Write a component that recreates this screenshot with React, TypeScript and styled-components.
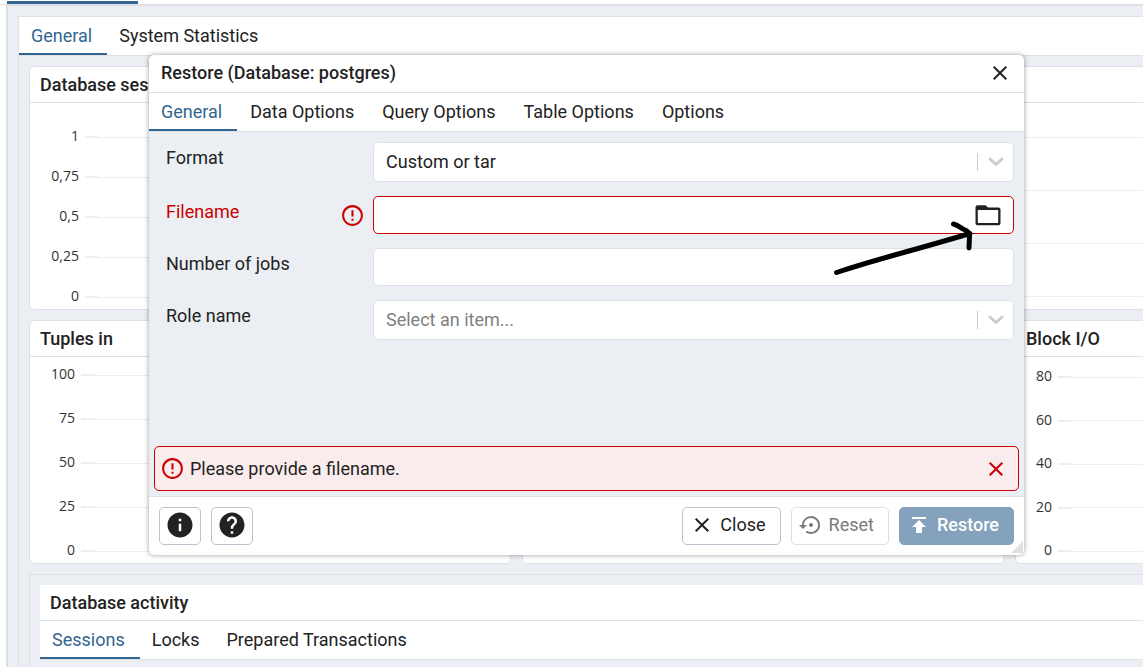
import React from "react";
import styled, { createGlobalStyle, css } from "styled-components";
import {
  MdClose,
  MdErrorOutline,
  MdHelp,
  MdInfo,
  MdPublish,
  MdSettingsBackupRestore,
} from "react-icons/md";

const color = {
  text: "#222222",
  primary: "#326690",
  primaryDisabled: "#84a2bb",
  page: "#ebeef3",
  border: "#dde0e6",
  control: "#bac1cd",
  error: "#cc0000",
  errorSoft: "#faecec",
  grid: "#eeeeee",
};

const GlobalStyle = createGlobalStyle`
  *, *::before, *::after { box-sizing: border-box; }
  html, body { margin: 0; height: 100%; overflow: hidden; }
  body {
    background: #fff;
    color: ${color.text};
    font-family: Roboto, "Liberation Sans", sans-serif;
    font-size: 18px;
    line-height: 24px;
  }
  button, input, select { font: inherit; color: inherit; }
`;

const Page = styled.div`
  position: relative;
  display: flex;
  flex-direction: column;
  height: 100vh;
  overflow: hidden;
`;

const DocumentTabs = styled.div`
  display: flex;
  height: 4px;
  padding: 1px 0 0 7px;
`;

const ActiveDocument = styled.div`
  width: 131px;
  background: ${color.primary};
`;

const Workspace = styled.div`
  display: flex;
  flex: 1;
  min-height: 0;
  border-top: 1px solid ${color.border};
`;

const Sidebar = styled.div`
  width: 6px;
`;

const Dashboard = styled.main`
  display: flex;
  flex: 1;
  min-width: 0;
  padding: 10px 0 0 10px;
  background: ${color.page};
  border-left: 2px solid ${color.border};
  border-top: 1px solid ${color.border};
`;

const DashboardPanel = styled.section`
  display: flex;
  flex: 1;
  flex-direction: column;
  min-width: 0;
  border: 1px solid ${color.border};
  border-width: 1px 0 0 1px;
`;

const TabBar = styled.div<{ $spaced?: boolean }>`
  display: flex;
  flex: none;
  gap: ${(p) => (p.$spaced ? 1 : 0)}px;
  height: 39px;
  background: #fff;
  border-bottom: 1px solid ${color.border};
`;

const Tab = styled.button<{ $active?: boolean }>`
  height: 38px;
  padding: 1px 15px 0 12px;
  border: 0;
  border-bottom: 2px solid ${(p) => (p.$active ? color.primary : "transparent")};
  background: none;
  color: ${(p) => (p.$active ? color.primary : color.text)};
  white-space: nowrap;
`;

const DashboardBody = styled.div`
  display: grid;
  flex: 1;
  grid-template-columns: minmax(max-content, 1fr);
  grid-template-rows: auto 1fr;
  gap: 10px;
  padding: 10px 0 0 10px;
  overflow: hidden;
`;

const ChartGrid = styled.div`
  display: grid;
  grid-template-columns: repeat(3, minmax(482px, 1fr));
  grid-auto-rows: 244px;
  gap: 10px 11px;
`;

const Card = styled.article<{ $wide?: boolean }>`
  display: flex;
  flex-direction: column;
  grid-column: span ${(p) => (p.$wide ? 2 : 1)};
  background: #fff;
  border: 1px solid ${color.border};
  border-radius: 5px;
`;

const CardTitle = styled.h2`
  flex: none;
  height: 36px;
  margin: 0;
  padding: 6px 10px;
  border-bottom: 1px solid ${color.border};
  font-size: 18px;
  font-weight: 500;
  line-height: 24px;
`;

const Plot = styled.div<{ $top: number; $axis: number }>`
  display: grid;
  flex: 1;
  grid-template-columns: ${(p) => p.$axis}px 1fr;
  align-content: space-between;
  padding: ${(p) => p.$top}px 0 2px;
`;

const TickLabel = styled.span`
  height: 20px;
  padding-right: 6px;
  color: #333;
  font-family: "Open Sans", "Noto Sans", sans-serif;
  font-size: 14px;
  line-height: 18px;
  text-align: right;
`;

const GridLine = styled.span`
  display: flex;
  align-items: center;
  height: 20px;

  &::before {
    width: 13px;
    height: 2px;
    background: ${color.grid};
    content: "";
  }

  &::after {
    flex: 1;
    height: 1px;
    background: ${color.grid};
    content: "";
  }
`;

const Activity = styled.section`
  padding: 10px;
  border: 1px solid ${color.border};
`;

const ActivityHeader = styled.header`
  background: #fff;
`;

const Dialog = styled.div`
  position: absolute;
  top: 55px;
  left: 149px;
  right: 119px;
  display: flex;
  flex-direction: column;
  height: 500px;
  overflow: hidden;
  background: #fff;
  border-radius: 5px;
  box-shadow: 0 0 5px rgba(0, 0, 0, 0.4);
`;

const DialogHeader = styled.header`
  display: flex;
  align-items: center;
  justify-content: space-between;
  height: 38px;
  padding: 0 12px 1px;
  border-bottom: 1px solid ${color.border};
`;

const DialogTitle = styled.h1`
  margin: 0;
  font-size: 18px;
  font-weight: 500;
  line-height: 24px;
`;

const IconButton = styled.button`
  display: flex;
  padding: 0;
  border: 0;
  background: none;
  color: inherit;
`;

const Form = styled.form`
  display: flex;
  flex: 1;
  flex-direction: column;
  gap: 14px;
  padding: 10px 10px 0 17px;
  background: ${color.page};
`;

const FieldRow = styled.div`
  display: grid;
  grid-template-columns: 165px 1fr;
  column-gap: 42px;
`;

const FieldLabel = styled.label<{ $invalid?: boolean }>`
  padding-top: 4px;
  color: ${(p) => (p.$invalid ? color.error : color.text)};
`;

const InvalidRow = styled(FieldRow)`
  grid-template-columns: 165px 32px 1fr;
  column-gap: 5px;
`;

const FieldError = styled.span`
  display: flex;
  align-items: center;
  justify-content: center;
  color: ${color.error};
`;

const Control = styled.div<{ $tall?: boolean; $invalid?: boolean }>`
  display: flex;
  align-items: center;
  height: ${(p) => (p.$tall ? 40 : 38)}px;
  padding-right: 6px;
  background: #fff;
  border: 1px solid ${(p) => (p.$invalid ? color.error : color.border)};
  border-radius: 5px;
`;

const bare = css`
  flex: 1;
  min-width: 0;
  height: 100%;
  padding: 0 12px;
  border: 0;
  outline: 0;
  background: none;
`;

const TextInput = styled.input`
  ${bare}
`;

const Select = styled.select<{ $placeholder?: boolean }>`
  ${bare}
  appearance: none;
  color: ${(p) => (p.$placeholder ? "#808080" : color.text)};
`;

const Indicator = styled.span`
  display: flex;
  align-items: center;
  justify-content: center;
  width: 30px;
  height: 18px;
  padding-left: 6px;
  border-left: 1px solid #ccc;
  color: #ccc;
`;

const FolderButton = styled(IconButton)`
  padding: 0 6px;
`;

const AlertArea = styled.div`
  padding: 0 5px 5px;
  background: ${color.page};
`;

const Alert = styled.div`
  display: flex;
  align-items: center;
  gap: 5px;
  height: 45px;
  padding: 0 10px 0 5px;
  border: 1px solid ${color.error};
  border-radius: 5px;
  background: ${color.errorSoft};

  svg, button { color: ${color.error}; }
`;

const AlertText = styled.span`
  flex: 1;
`;

const DialogFooter = styled.footer`
  display: flex;
  gap: 10px;
  padding: 10px;
  border-top: 1px solid ${color.border};
`;

const Spacer = styled.span`
  flex: 1;
`;

const Button = styled.button<{ $primary?: boolean; $square?: boolean }>`
  display: flex;
  align-items: center;
  justify-content: center;
  gap: 6px;
  height: 38px;
  padding: 0 ${(p) => (p.$square ? 5 : 14)}px 2px ${(p) => (p.$square ? 5 : 7)}px;
  border: 1px solid ${color.control};
  border-radius: 5px;
  background: #fff;

  &:disabled {
    border-color: ${color.border};
    color: #7a7a7a;
  }

  ${(p) =>
    p.$primary &&
    css`
      &:disabled {
        border-color: ${color.primaryDisabled};
        background: ${color.primaryDisabled};
        color: #fff;
        font-weight: 500;
      }
    `}
`;

const ResizeGrip = styled.svg`
  position: absolute;
  right: 1px;
  bottom: 2px;
`;

const Annotation = styled.svg`
  position: absolute;
  top: 218px;
  left: 830px;
  pointer-events: none;
`;

const Chevron = () => (
  <svg width="16" height="10" viewBox="0 0 16 10" fill="none" aria-hidden="true">
    <path d="M2 2l6 5.500L14 2" stroke="currentColor" strokeWidth="3" strokeLinecap="round" strokeLinejoin="round" />
  </svg>
);

const Folder = () => (
  <svg width="26" height="21" viewBox="0 0 26 21" aria-hidden="true">
    <path
      fill="currentColor"
      fillRule="evenodd"
      d="M2.500 .2h8l2.500 2.400H23.500a2 2 0 0 1 2 2v13.600a2 2 0 0 1-2 2H2.500a2 2 0 0 1-2-2V2.200A2 2 0 0 1 2.500 .2zM2.800 5v12.300c0 .4.200.600.600.600h19.200c.4 0 .6-.2.600-.600V5z"
    />
  </svg>
);

interface ChartProps {
  title?: string;
  ticks: string[];
  top: number;
  axis: number;
  wide?: boolean;
}

const Chart = ({ title, ticks, top, axis, wide }: ChartProps) => (
  <Card $wide={wide}>
    <CardTitle>{title}</CardTitle>
    <Plot $top={top} $axis={axis}>
      {ticks.map((tick, i) => (
        <React.Fragment key={i}>
          <TickLabel>{tick}</TickLabel>
          <GridLine />
        </React.Fragment>
      ))}
    </Plot>
  </Card>
);

const charts: ChartProps[] = [
  { title: "Database sessions", ticks: ["1", "0,75", "0,5", "0,25", "0"], top: 24, axis: 55 },
  { ticks: ["", "", "", ""], top: 24, axis: 55, wide: true },
  { title: "Tuples in", ticks: ["100", "75", "50", "25", "0"], top: 8, axis: 51 },
  { ticks: ["", "", "", "", ""], top: 8, axis: 51 },
  { title: "Block I/O", ticks: ["80", "60", "40", "20", "0"], top: 10, axis: 42 },
];

const dialogTabs = ["General", "Data Options", "Query Options", "Table Options", "Options"];

export default function App() {
  return (
    <>
      <GlobalStyle />
      <Page>
        <DocumentTabs>
          <ActiveDocument />
        </DocumentTabs>
        <Workspace>
          <Sidebar />
          <Dashboard>
            <DashboardPanel>
              <TabBar>
                <Tab $active>General</Tab>
                <Tab>System Statistics</Tab>
              </TabBar>
              <DashboardBody>
                <ChartGrid>
                  {charts.map((chart, i) => (
                    <Chart key={i} {...chart} />
                  ))}
                </ChartGrid>
                <Activity>
                  <ActivityHeader>
                    <CardTitle>Database activity</CardTitle>
                    <TabBar>
                      <Tab $active>Sessions</Tab>
                      <Tab>Locks</Tab>
                      <Tab>Prepared Transactions</Tab>
                    </TabBar>
                  </ActivityHeader>
                </Activity>
              </DashboardBody>
            </DashboardPanel>
          </Dashboard>
        </Workspace>

        <Dialog role="dialog" aria-labelledby="dialog-title">
          <DialogHeader>
            <DialogTitle id="dialog-title">Restore (Database: postgres)</DialogTitle>
            <IconButton aria-label="Close dialog">
              <MdClose size={24} />
            </IconButton>
          </DialogHeader>
          <TabBar $spaced>
            {dialogTabs.map((name, i) => (
              <Tab key={name} $active={i === 0}>
                {name}
              </Tab>
            ))}
          </TabBar>
          <Form>
            <FieldRow>
              <FieldLabel htmlFor="format">Format</FieldLabel>
              <Control $tall>
                <Select id="format">
                  <option>Custom or tar</option>
                </Select>
                <Indicator>
                  <Chevron />
                </Indicator>
              </Control>
            </FieldRow>
            <InvalidRow>
              <FieldLabel htmlFor="filename" $invalid>
                Filename
              </FieldLabel>
              <FieldError>
                <MdErrorOutline size={25} />
              </FieldError>
              <Control $invalid>
                <TextInput id="filename" />
                <FolderButton type="button" aria-label="Browse files">
                  <Folder />
                </FolderButton>
              </Control>
            </InvalidRow>
            <FieldRow>
              <FieldLabel htmlFor="jobs">Number of jobs</FieldLabel>
              <Control>
                <TextInput id="jobs" />
              </Control>
            </FieldRow>
            <FieldRow>
              <FieldLabel htmlFor="role">Role name</FieldLabel>
              <Control $tall>
                <Select id="role" $placeholder>
                  <option>Select an item...</option>
                </Select>
                <Indicator>
                  <Chevron />
                </Indicator>
              </Control>
            </FieldRow>
          </Form>
          <AlertArea>
            <Alert role="alert">
              <MdErrorOutline size={25} />
              <AlertText>Please provide a filename.</AlertText>
              <IconButton aria-label="Dismiss">
                <MdClose size={24} />
              </IconButton>
            </Alert>
          </AlertArea>
          <DialogFooter>
            <Button $square aria-label="Information">
              <MdInfo size={30} />
            </Button>
            <Button $square aria-label="Help">
              <MdHelp size={30} />
            </Button>
            <Spacer />
            <Button>
              <MdClose size={24} />
              Close
            </Button>
            <Button disabled>
              <MdSettingsBackupRestore size={24} />
              Reset
            </Button>
            <Button $primary disabled>
              <MdPublish size={24} />
              Restore
            </Button>
          </DialogFooter>
          <ResizeGrip width="12" height="12" viewBox="0 0 12 12" aria-hidden="true">
            <path d="M12 0v12H0z" fill="#e0e0e0" />
          </ResizeGrip>
        </Dialog>

        <Annotation width="150" height="62" viewBox="0 0 150 62" fill="none" aria-hidden="true">
          <path
            d="M6.500 54.500Q32 46 70 35.500T140 15.500M123.500 6c5 1 6.500 4 10.500 5.500s5.500 4 5.500 6.500L139 30"
            stroke="#000"
            strokeWidth="5"
            strokeLinecap="round"
            strokeLinejoin="round"
          />
        </Annotation>
      </Page>
    </>
  );
}
